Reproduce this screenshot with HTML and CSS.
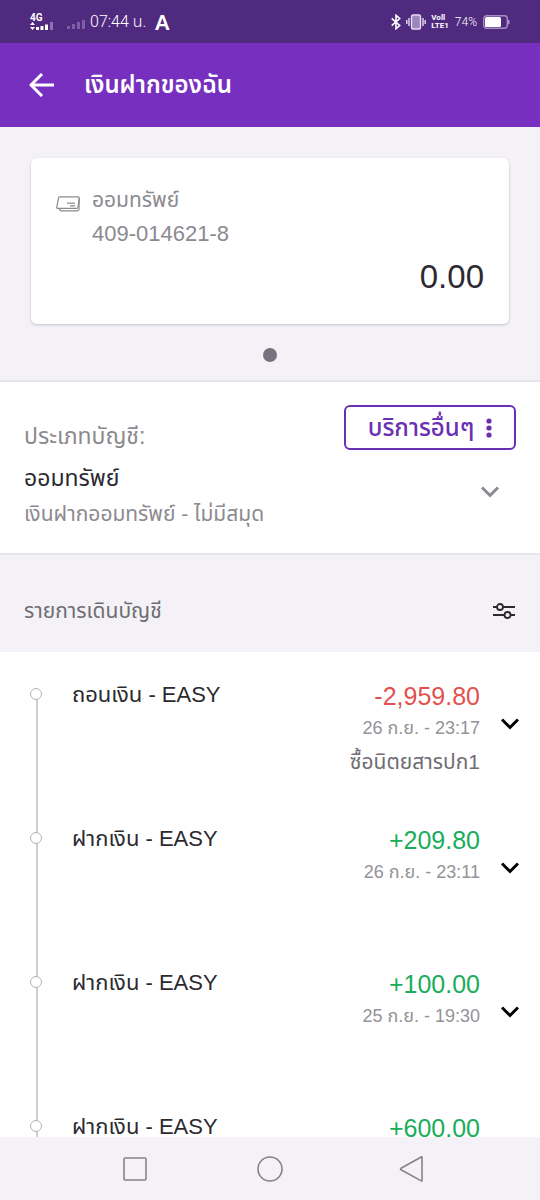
FILE: index.html
```html
<!DOCTYPE html>
<html lang="th">
<head>
<meta charset="utf-8">
<meta name="viewport" content="width=device-width, initial-scale=1">
<title>เงินฝากของฉัน</title>
<link rel="stylesheet" href="styles.css">
</head>
<body>
<div class="screen">
  <div class="status">
    <div class="status-side">
      <span class="network">
        <span class="network-type">4G</span>
        <svg width="24" height="8" viewBox="0 0 24 8" fill="#fff" aria-hidden="true"><path d="M0 3l2.500-3L5 3zM0 5l2.500 3L5 5z"/><path d="M6 5h3v3H6zM10.500 4h3v4h-3zM15 2.500h3V8h-3z"/><path d="M20 0h3v8h-3z" opacity=".35"/></svg>
      </span>
      <svg class="signal-off" width="18" height="9" viewBox="0 0 18 9" fill="#7d5fa6" aria-hidden="true"><path d="M0 6h3v3H0zM5 4h3v5H5zM10 2h3v7h-3zM15 0h3v9h-3z"/></svg>
      <span class="clock">07:44 น.</span>
      <span class="app-mark">A</span>
    </div>
    <div class="status-side">
      <svg width="10" height="16" viewBox="0 0 10 16" fill="none" stroke="#fff" stroke-width="1.600" aria-hidden="true"><path d="M.7 4.300L8.700 11.500 5 14.700V1.300L8.700 4.500.7 11.700"/></svg>
      <svg class="vibrate" width="20" height="16" viewBox="0 0 20 16" fill="none" stroke="#e9ddf5" stroke-width="1.400" aria-hidden="true"><rect x="5.500" y="1" width="9" height="14" rx="1.500" fill="#9b86bd"/><path d="M3 4v8M17 4v8M.8 6v4M19.200 6v4"/></svg>
      <span class="volte"><span>Voll</span><span>LTE1</span></span>
      <span class="battery-level">74%</span>
      <svg width="27" height="14" viewBox="0 0 27 14" aria-hidden="true"><rect x=".7" y=".7" width="23.600" height="12.600" rx="3" fill="none" stroke="#a78fc4" stroke-width="1.400"/><path d="M25 4.500q1.800 0 1.800 2.500T25 9.500z" fill="#a78fc4"/><rect x="2" y="2" width="16" height="10" rx="1.500" fill="#fff"/></svg>
    </div>
  </div>

  <header class="appbar">
    <button class="icon-button" type="button" aria-label="ย้อนกลับ">
      <svg width="26" height="24" viewBox="0 0 26 24" fill="none" stroke="#fff" stroke-width="3" stroke-linejoin="round" aria-hidden="true"><path d="M25 12H3M13 1L2 12l11 11"/></svg>
    </button>
    <h1 class="appbar-title">เงินฝากของฉัน</h1>
  </header>

  <section class="carousel">
    <article class="card">
      <svg class="card-icon" width="24" height="16" viewBox="0 0 24 16" fill="none" stroke="#8b8a8f" stroke-width="1.200" stroke-linejoin="round" aria-hidden="true"><path d="M3.800.8h18.400q1 0 1 1l-1.200 9.400q-.2 1.200-1.200 1.200H1.600q-1 0-.9-1L2.600 1.800q.2-1 1.200-1z"/><path d="M3.500 12.500q.2 2.300 2 2.300h16q1.300 0 1.500-1.300l.3-11"/><path d="M11 7.200h8M14 9.800h5"/></svg>
      <div>
        <h2 class="card-name">ออมทรัพย์</h2>
        <p class="card-number">409-014621-8</p>
      </div>
      <p class="card-balance">0.00</p>
    </article>
    <span class="dot"></span>
  </section>

  <section class="account">
    <div class="account-top">
      <p class="account-label">ประเภทบัญชี:</p>
      <button class="services" type="button">บริการอื่นๆ
        <svg width="6" height="20" viewBox="0 0 6 20" fill="#6b2fb3" aria-hidden="true"><circle cx="3" cy="3" r="2.600"/><circle cx="3" cy="10" r="2.600"/><circle cx="3" cy="17" r="2.600"/></svg>
      </button>
    </div>
    <div class="account-detail">
      <div>
        <h2 class="account-type">ออมทรัพย์</h2>
        <p class="account-product">เงินฝากออมทรัพย์ - ไม่มีสมุด</p>
      </div>
      <button class="icon-button account-toggle" type="button" aria-label="ดูรายละเอียดบัญชี">
        <svg width="18" height="12" viewBox="0 0 18 12" fill="none" stroke="#8b8a8f" stroke-width="3" aria-hidden="true"><path d="M1 1.500l8 8 8-8"/></svg>
      </button>
    </div>
  </section>

  <div class="list-head">
    <h2 class="list-title">รายการเดินบัญชี</h2>
    <button class="icon-button" type="button" aria-label="ตัวกรอง">
      <svg width="22" height="16" viewBox="0 0 22 16" fill="none" stroke="#2c2a30" stroke-width="1.800" aria-hidden="true"><path d="M0 4h4M10 4h12M0 12h11M18 12h4"/><circle cx="7" cy="4" r="3"/><circle cx="14.500" cy="12" r="3"/></svg>
    </button>
  </div>

  <ul class="list">
    <li class="row">
      <span class="rail"></span>
      <span class="row-title">ถอนเงิน - EASY</span>
      <div class="row-values"><span class="amount debit">-2,959.80</span><time class="date">26 ก.ย. - 23:17</time><span class="note">ซื้อนิตยสารปก1</span></div>
      <button class="icon-button row-toggle" type="button" aria-label="ดูรายการ"><svg width="18" height="12" viewBox="0 0 18 12" fill="none" stroke="#000" stroke-width="3" aria-hidden="true"><path d="M1 1.500l8 8 8-8"/></svg></button>
    </li>
    <li class="row">
      <span class="rail"></span>
      <span class="row-title">ฝากเงิน - EASY</span>
      <div class="row-values"><span class="amount">+209.80</span><time class="date">26 ก.ย. - 23:11</time></div>
      <button class="icon-button row-toggle" type="button" aria-label="ดูรายการ"><svg width="18" height="12" viewBox="0 0 18 12" fill="none" stroke="#000" stroke-width="3" aria-hidden="true"><path d="M1 1.500l8 8 8-8"/></svg></button>
    </li>
    <li class="row">
      <span class="rail"></span>
      <span class="row-title">ฝากเงิน - EASY</span>
      <div class="row-values"><span class="amount">+100.00</span><time class="date">25 ก.ย. - 19:30</time></div>
      <button class="icon-button row-toggle" type="button" aria-label="ดูรายการ"><svg width="18" height="12" viewBox="0 0 18 12" fill="none" stroke="#000" stroke-width="3" aria-hidden="true"><path d="M1 1.500l8 8 8-8"/></svg></button>
    </li>
    <li class="row">
      <span class="rail"></span>
      <span class="row-title">ฝากเงิน - EASY</span>
      <div class="row-values"><span class="amount">+600.00</span></div>
    </li>
  </ul>

  <nav class="navbar">
    <button class="icon-button" type="button" aria-label="แอปล่าสุด"><svg width="26" height="26" viewBox="0 0 26 26" fill="none" stroke="#858388" stroke-width="1.600" aria-hidden="true"><rect x="3" y="2" width="22" height="22" rx="1"/></svg></button>
    <button class="icon-button" type="button" aria-label="หน้าหลัก"><svg width="26" height="26" viewBox="0 0 26 26" fill="none" stroke="#858388" stroke-width="1.600" aria-hidden="true"><circle cx="13" cy="13" r="12"/></svg></button>
    <button class="icon-button" type="button" aria-label="กลับ"><svg width="34" height="26" viewBox="-9 0 34 26" fill="none" stroke="#858388" stroke-width="1.600" stroke-linejoin="round" aria-hidden="true"><path d="M24 1.500v23q0 .7-.7.400L3 13.700q-1-.7 0-1.400L23.300 1q.7-.3.7.5z"/></svg></button>
  </nav>
</div>
</body>
</html>
```
FILE: styles.css
```css
*, *::before { box-sizing: border-box; margin: 0; padding: 0; }

body {
  font-family: "Liberation Sans", "Noto Sans Thai", sans-serif;
  color: #2c2a30;
  background: #fff;
}

h1, h2 { font-weight: 400; }
svg { display: block; flex: none; }

.screen { display: flex; flex-direction: column; height: 100vh; }
.screen > * { flex: none; }

.icon-button {
  display: flex;
  align-items: center;
  justify-content: center;
  border: 0;
  background: none;
  cursor: pointer;
}

.status {
  display: flex;
  justify-content: space-between;
  align-items: center;
  height: 43px;
  padding: 0 30px;
  background: #4f2a7f;
  color: #fff;
}
.status-side { display: flex; align-items: center; }
.network { display: flex; flex-direction: column; }
.network-type { font: 700 10px/9px Roboto, sans-serif; }
.signal-off { margin: 6px 5px 0 13px; }
.clock { font: 300 16px/20px Roboto, "Noto Sans Thai", sans-serif; }
.app-mark { margin-left: 9px; font: 900 20px/20px Lato, sans-serif; }
.vibrate { margin: 0 5px; }
.volte { display: flex; flex-direction: column; font: 700 8px/8px Roboto, sans-serif; }
.battery-level { margin: 0 6px; font: 300 12px/16px Roboto, sans-serif; }

.appbar {
  display: flex;
  align-items: center;
  gap: 29px;
  height: 84px;
  padding: 0 29px;
  background: #772fbf;
  color: #fff;
}
.appbar-title { font-size: 24px; line-height: 40px; font-weight: 600; }

.carousel {
  display: flex;
  flex-direction: column;
  align-items: center;
  gap: 24px;
  padding: 31px 31px 18px;
  background: #f4f2f6;
  border-bottom: 2px solid #e6e5e8;
}
.card {
  display: grid;
  grid-template-columns: 24px 1fr;
  column-gap: 12px;
  width: 100%;
  padding: 25px 25px 21px;
  border-radius: 6px;
  background: #fff;
  box-shadow: 0 1px 3px #00000033;
}
.card-icon { margin-top: 13px; }
.card-name, .card-number { line-height: 34px; color: #8b8a8f; }
.card-name { font-size: 21px; }
.card-number { font-size: 22px; }
.card-balance { grid-column: 1 / -1; font-size: 33px; line-height: 52px; text-align: right; }
.dot { width: 14px; height: 14px; border-radius: 50%; background: #77727e; }

.account { padding: 23px 24px 22px; border-bottom: 2px solid #e6e5e8; }
.account-top { display: flex; justify-content: space-between; align-items: flex-start; }
.account-label { margin-top: 14px; font-size: 23px; line-height: 34px; color: #8b8a8f; }
.services {
  display: flex;
  align-items: center;
  justify-content: center;
  gap: 12px;
  width: 172px;
  height: 45px;
  border: 2px solid #6b2fb3;
  border-radius: 6px;
  background: #fff;
  color: #6b2fb3;
  font: 500 24px/34px "Liberation Sans", "Noto Sans Thai", sans-serif;
  cursor: pointer;
}
.account-detail {
  display: flex;
  justify-content: space-between;
  margin-top: 8px;
  padding-right: 17px;
}
.account-type { font-size: 23px; line-height: 35px; }
.account-product { font-size: 21px; line-height: 35px; color: #8b8a8f; }
.account-toggle { height: 62px; }

.list-head {
  display: flex;
  align-items: center;
  justify-content: space-between;
  height: 97px;
  padding: 14px 25px 0 24px;
  background: #f4f2f6;
}
.list-title { font-size: 21px; line-height: 34px; color: #6f6d73; }

.screen > .list { flex: 1 1 0; min-height: 0; overflow: hidden; list-style: none; }
.row {
  display: grid;
  grid-template-columns: 72px 1fr auto 60px;
  min-height: 144px;
}
.rail {
  position: relative;
  background: linear-gradient(#cfced1, #cfced1) 36px 0 / 2px 100% no-repeat;
}
.row:first-child .rail { background-position: 36px 42px; }
.rail::before {
  content: "";
  position: absolute;
  top: 36px;
  left: 30px;
  width: 12px;
  height: 12px;
  border: 1px solid #b4b3b7;
  border-radius: 50%;
  background: #fff;
}
.row-title { padding-top: 26px; font-size: 22px; line-height: 34px; }
.row-values {
  display: flex;
  flex-direction: column;
  align-items: flex-end;
  padding-top: 28px;
}
.amount { font-size: 25px; line-height: 32px; color: #19ae5b; }
.amount.debit { color: #e4504f; }
.date { font-size: 18px; line-height: 32px; color: #949297; }
.note { font-size: 21px; line-height: 36px; color: #6f6d73; }
.row-toggle { align-self: stretch; }

.navbar {
  display: grid;
  grid-template-columns: repeat(3, 1fr);
  height: 63px;
  padding: 0 66px;
  background: #f4f2f6;
}
```
